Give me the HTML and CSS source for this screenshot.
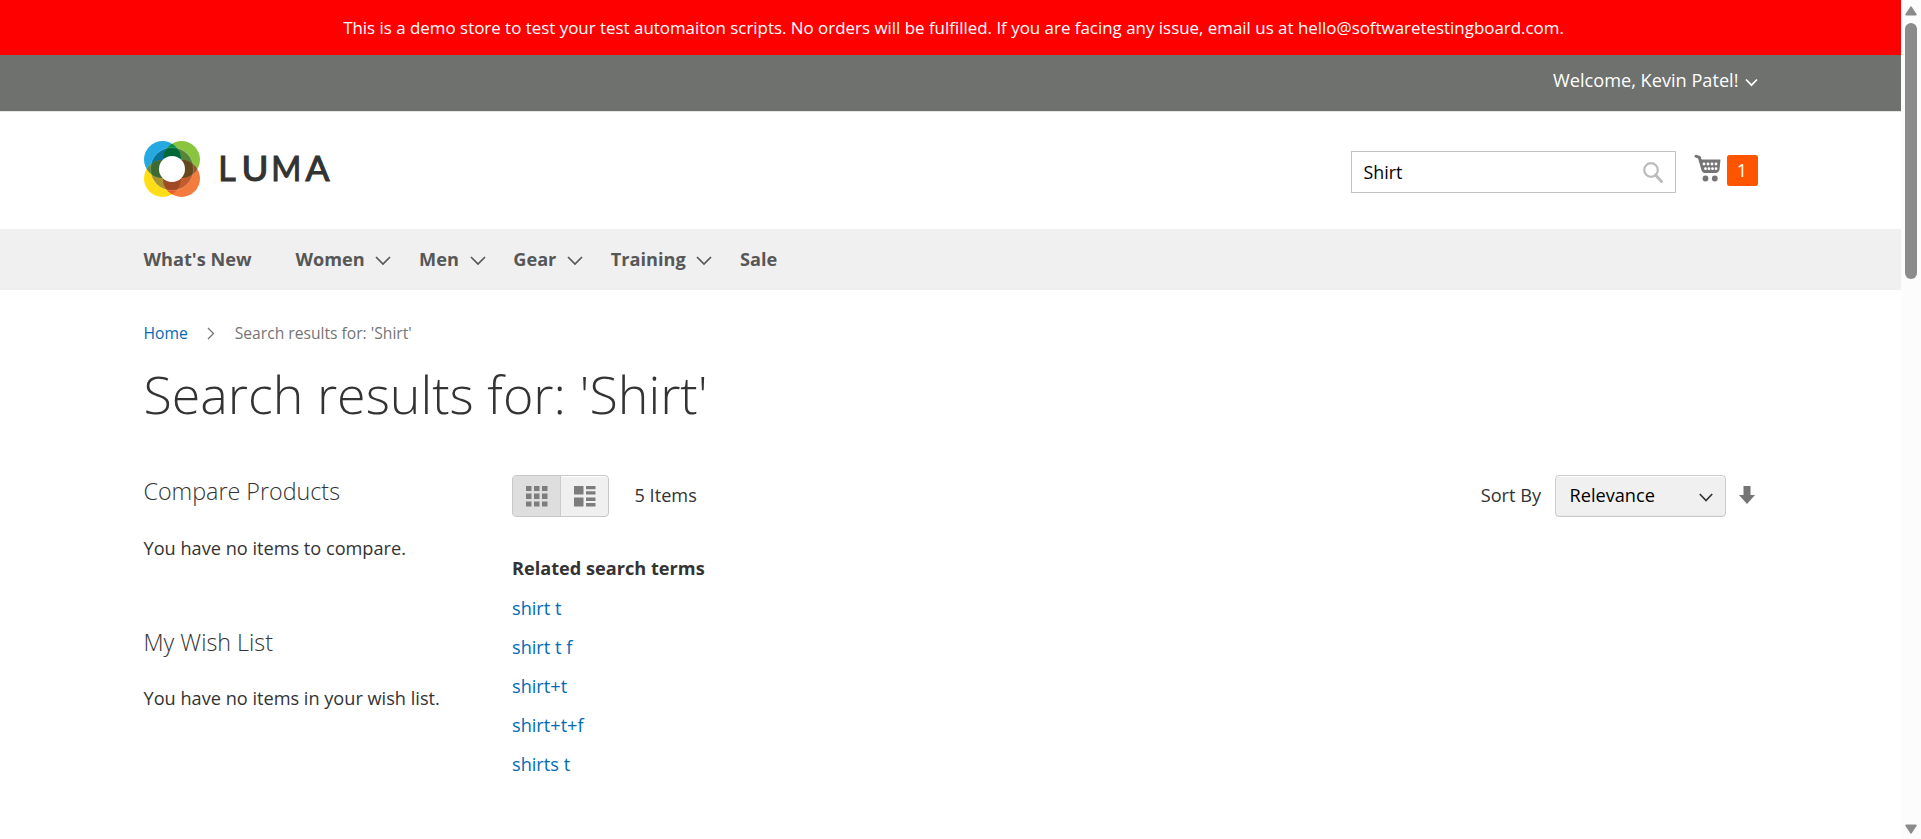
FILE: index.html
```
<!DOCTYPE html>
<html lang="en">
<head>
<meta charset="utf-8">
<title>Search results for: 'Shirt'</title>
<link rel="stylesheet" href="styles.css">
</head>
<body>
<div class="viewport">
  <div class="page">
    <div class="notice"><span>This is a demo store to test your test automaiton scripts. No orders will be fulfilled. If you are facing any issue, email us at hello@softwaretestingboard.com.</span></div>
    <div class="panel"><div class="container panel-inner">
      <span class="welcome">Welcome, Kevin Patel!</span>
      <svg class="welcome-caret" width="13" height="9" viewBox="0 0 13 9"><path d="M1 1.5l5.500 5.700L12 1.500" fill="none" stroke="#fff" stroke-width="1.700"/></svg>
    </div></div>
    <header class="container header">
      <a class="logo">
        <svg width="190" height="58" viewBox="0 0 190 58">
          <defs>
            <clipPath id="ctl"><circle cx="19.500" cy="19.500" r="18.500"/></clipPath>
            <clipPath id="ctr"><circle cx="38.500" cy="19.500" r="18.500"/></clipPath>
            <clipPath id="cbl"><circle cx="19.500" cy="38.500" r="18.500"/></clipPath>
            <clipPath id="cbr"><circle cx="38.500" cy="38.500" r="18.500"/></clipPath>
          </defs>
          <circle cx="19.500" cy="19.500" r="18.500" fill="#26a9e0"/>
          <circle cx="38.500" cy="19.500" r="18.500" fill="#8bc53f"/>
          <circle cx="19.500" cy="38.500" r="18.500" fill="#ffde17"/>
          <circle cx="38.500" cy="38.500" r="18.500" fill="#f47b3e"/>
          <circle cx="29" cy="29" r="21.500" fill="#07729b" clip-path="url(#ctl)"/>
          <circle cx="29" cy="29" r="21.500" fill="#54853b" clip-path="url(#ctr)"/>
          <circle cx="29" cy="29" r="21.500" fill="#a69331" clip-path="url(#cbl)"/>
          <circle cx="29" cy="29" r="21.500" fill="#c35c2d" clip-path="url(#cbr)"/>
          <g clip-path="url(#ctl)">
            <circle cx="38.500" cy="19.500" r="18.500" fill="#009247"/>
            <circle cx="19.500" cy="38.500" r="18.500" fill="#5d8a3a"/>
          </g>
          <g clip-path="url(#cbr)">
            <circle cx="38.500" cy="19.500" r="18.500" fill="#8a5a2c"/>
            <circle cx="19.500" cy="38.500" r="18.500" fill="#f05a28"/>
          </g>
          <g clip-path="url(#ctl)"><g clip-path="url(#ctr)"><circle cx="29" cy="29" r="21.500" fill="#006837"/></g></g>
          <g clip-path="url(#ctl)"><g clip-path="url(#cbl)"><circle cx="29" cy="29" r="21.500" fill="#3b6a33"/></g></g>
          <g clip-path="url(#cbr)"><g clip-path="url(#ctr)"><circle cx="29" cy="29" r="21.500" fill="#64481f"/></g></g>
          <g clip-path="url(#cbr)"><g clip-path="url(#cbl)"><circle cx="29" cy="29" r="21.500" fill="#9f4a24"/></g></g>
          <g fill="none" stroke="#fff" stroke-opacity=".3" stroke-width=".7">
            <circle cx="29" cy="29" r="21.500"/>
          </g>
          <circle cx="29" cy="29" r="13" fill="#fff"/>
          <g class="wordmark"><text x="75.300" y="41">L</text><text x="98.500" y="41" textLength="27" lengthAdjust="spacingAndGlyphs">U</text><text x="128.200" y="41" textLength="30" lengthAdjust="spacingAndGlyphs">M</text><text x="162.500" y="41" textLength="24" lengthAdjust="spacingAndGlyphs">A</text></g>
        </svg>
      </a>
      <div class="tools">
        <div class="search"><span>Shirt</span>
          <svg width="20" height="21" viewBox="0 0 20 21"><circle cx="8" cy="8" r="6.800" fill="none" stroke="#bbb" stroke-width="2.200"/><path d="M12.500 13l6 6.500" stroke="#bbb" stroke-width="3" stroke-linecap="round"/></svg>
        </div>
        <svg class="cart" width="27" height="28" viewBox="0 0 27 28">
          <path d="M2 2.200L5.300 3.300L9.200 16.500" fill="none" stroke="#757575" stroke-width="3" stroke-linecap="round" stroke-linejoin="round"/>
          <path d="M5 5.500H26.500L25.500 15.500Q24.500 19 21.500 19H9.500Z" fill="#757575"/>
          <g fill="#fff"><circle cx="10" cy="10" r="1.400"/><circle cx="14" cy="10" r="1.400"/><circle cx="18" cy="10" r="1.400"/><circle cx="22" cy="10" r="1.400"/><circle cx="11.500" cy="14.700" r="1.400"/><circle cx="15" cy="14.700" r="1.400"/><circle cx="18.500" cy="14.700" r="1.400"/><circle cx="22" cy="14.700" r="1.400"/></g>
          <circle cx="11.500" cy="24.500" r="2.900" fill="#757575"/><circle cx="20.800" cy="24.500" r="2.900" fill="#757575"/>
        </svg>
        <span class="count">1</span>
      </div>
    </header>
    <nav class="nav"><div class="container nav-inner">
      <a class="first">What's New</a>
      <a>Women<svg width="16" height="10" viewBox="0 0 16 10"><path d="M1 1l7 7 7-7"/></svg></a>
      <a>Men<svg width="16" height="10" viewBox="0 0 16 10"><path d="M1 1l7 7 7-7"/></svg></a>
      <a>Gear<svg width="16" height="10" viewBox="0 0 16 10"><path d="M1 1l7 7 7-7"/></svg></a>
      <a>Training<svg width="16" height="10" viewBox="0 0 16 10"><path d="M1 1l7 7 7-7"/></svg></a>
      <a>Sale</a>
    </div></nav>
    <div class="container crumbs"><a>Home</a><svg width="8" height="13" viewBox="0 0 8 13"><path d="M1 1l5.500 5.500L1 12" fill="none" stroke="#757575" stroke-width="1.300"/></svg><span>Search results for: 'Shirt'</span></div>
    <h1 class="container title"><span>Search results for: 'Shirt'</span></h1>
    <div class="container columns">
      <aside class="sidebar">
        <section><h2>Compare Products</h2><p>You have no items to compare.</p></section>
        <section><h2>My Wish List</h2><p>You have no items in your wish list.</p></section>
      </aside>
      <main class="main">
        <div class="toolbar">
          <div class="modes">
            <span class="mode active"><svg width="22" height="21" viewBox="0 0 22 21" fill="#7d7d7d"><path d="M0 0h5.500v5H0zM8 0h5.500v5H8zM16 0h5.500v5H16zM0 7.500h5.500v5.500H0zM8 7.500h5.500v5.500H8zM16 7.500h5.500v5.500H16zM0 15.500h5.500v5H0zM8 15.500h5.500v5H8zM16 15.500h5.500v5H16z"/></svg></span>
            <span class="mode"><svg width="22" height="21" viewBox="0 0 22 21" fill="#7d7d7d"><path d="M0 0h9.500v8.500H0zM12 0h9.500v3.200H12zM12 5.200h9.500v3.300H12zM0 11.500h9.500v9H0zM12 11.500h9.500v3.500H12zM12 17h9.500v3.500H12z"/></svg></span>
          </div>
          <span class="amount">5 Items</span>
          <span class="sort-label">Sort By</span>
          <div class="select"><span>Relevance</span><svg width="14" height="9" viewBox="0 0 14 9"><path d="M.8 1l6.200 6.500L13.200 1" fill="none" stroke="#333" stroke-width="1.700"/></svg></div>
          <svg class="dir" width="16" height="18" viewBox="0 0 16 18"><path d="M4.500 0h7v9H16L8 18 0 9h4.500z" fill="#757575"/></svg>
        </div>
        <dl class="terms">
          <dt>Related search terms</dt>
          <dd><a>shirt t</a></dd><dd><a>shirt t f</a></dd><dd><a>shirt+t</a></dd><dd><a>shirt+t+f</a></dd><dd><a>shirts t</a></dd>
        </dl>
      </main>
    </div>
  </div>
  <div class="scrollbar">
    <svg width="12" height="10" viewBox="0 0 12 10"><path d="M6 1.200L10.800 8.500H1.200z" fill="#8b8b8b" stroke="#8b8b8b" stroke-width="1.800" stroke-linejoin="round"/></svg>
    <span class="thumb"></span>
    <svg class="down" width="12" height="10" viewBox="0 0 12 10"><path d="M6 8.800L10.800 1.500H1.200z" fill="#8b8b8b" stroke="#8b8b8b" stroke-width="1.800" stroke-linejoin="round"/></svg>
  </div>
</div>
</body>
</html>
```
FILE: styles.css
```
* { box-sizing: border-box; }
body { margin: 0; background: #fff; color: #333; font: 18.17px/25px "Open Sans", "Noto Sans", sans-serif; overflow: hidden; }
svg { display: block; flex: none; }
h1, h2, p, dl, dd { margin: 0; }
.viewport { display: flex; height: 839px; }
.page { flex: 1; min-width: 0; }
.container { width: 1614px; margin: 0 auto; }
.notice { height: 55px; padding: 15px 0 0 6px; background: #f00; color: #fff; text-align: center; font-size: 16.92px; white-space: nowrap; }
.panel { height: 57px; background: #6e716e; border-bottom: 1px solid #e5e5e5; color: #fff; }
.panel-inner { display: flex; justify-content: flex-end; padding-top: 13px; }
.welcome-caret { margin: 10px 0 0 6px; }
.header { display: flex; justify-content: space-between; height: 117px; }
.logo { margin-left: -0.5px; padding-top: 28px; }
.wordmark { font: 400 34px Lato, sans-serif; fill: #333; stroke: #333; stroke-width: 1.1px; }
.tools { display: flex; padding-top: 39px; }
.search { display: flex; justify-content: space-between; width: 325px; height: 42px; padding: 8px 12px 0 12px; border: 1px solid #c2c2c2; color: #000; font-size: 17.8px; }
.search svg { margin-top: 2px; }
.cart { margin: 3px 0 0 18px; }
.count { width: 31px; height: 31px; margin: 4px 0 0 6px; border-radius: 2.5px; background: #ff5501; color: #fff; line-height: 31px; text-align: center; }
.nav { height: 61px; background: #f0f0f0; }
.nav-inner { display: flex; padding-top: 18px; color: #575757; font-weight: 700; }
.nav a { display: flex; margin-right: 27.7px; }
.nav .first { margin-right: 44px; }
.nav svg { margin: 9px 0 0 10.7px; fill: none; stroke: #575757; stroke-width: 1.7; }
.crumbs { display: flex; height: 68px; padding-top: 31px; color: #757575; font-size: 15.65px; line-height: 24px; }
.crumbs a, .terms a { color: #006bb4; }
.crumbs svg { margin: 6px 20px 0 19px; }
.title { font-size: 51.95px; line-height: 55px; font-weight: 300; padding-top: 8px; height: 117px; }
.columns { display: flex; }
.sidebar { width: 368.5px; }
.sidebar section { height: 151px; padding-top: 2px; }
.sidebar h2 { font-size: 23.3px; line-height: 28px; font-weight: 300; }
.sidebar p { padding-top: 31px; }
.sidebar section + section p { padding-top: 30px; }
.main { flex: 1; }
.toolbar { display: flex; height: 42px; }
.modes { display: flex; width: 97px; border: 1px solid #c8c8c8; border-radius: 4px; overflow: hidden; background: #f0f0f0; box-shadow: inset 0 1px #fff; }
.mode { display: flex; flex: 1; padding: 10px 0 0 13px; }
.mode.active { background: #dedede; border-right: 1px solid #ccc; }
.amount { margin: 8px auto 0 25.5px; }
.sort-label { margin: 8px 13.5px 0 0; }
.select { display: flex; justify-content: space-between; width: 171px; padding: 7px 12px 0 14px; border: 1px solid #ccc; border-radius: 4px; background: #f0f0f0; box-shadow: inset 0 1px #fff, inset 0 -1px #e6e6e6; color: #000; }
.select svg { margin-top: 10px; }
.dir { margin: 11px 2.5px 0 13.5px; }
.terms { padding-top: 39px; }
.terms dt { font-weight: 700; margin-bottom: 15px; }
.terms dd { margin-bottom: 14px; }
.scrollbar { display: flex; flex-direction: column; align-items: center; width: 20px; padding: 6px 0 5px; background: #fcfcfc; }
.thumb { width: 12px; height: 256px; margin-top: 7px; border-radius: 6px; background: #8b8b8b; }
.down { margin-top: auto; }
```
